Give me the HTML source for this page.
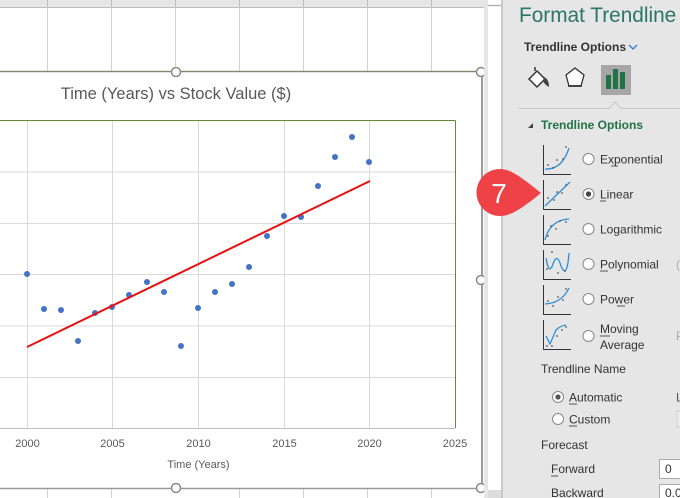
<!DOCTYPE html>
<html><head><meta charset="utf-8"><style>
html,body{margin:0;padding:0;width:680px;height:498px;overflow:hidden;background:#fff;font-family:"Liberation Sans",sans-serif}
svg text{font-family:"Liberation Sans",sans-serif}
</style></head><body>
<svg width="680" height="498" viewBox="0 0 680 498" xmlns="http://www.w3.org/2000/svg">
<rect x="0" y="0" width="484" height="498" fill="#fff"/>
<rect x="0" y="0" width="484" height="7" fill="#e6e6e6"/>
<line x1="0" y1="7.5" x2="484" y2="7.5" stroke="#bdbdbd"/>
<g stroke="#d4d4d4">
<line x1="47.5" y1="0" x2="47.5" y2="71"/><line x1="111.5" y1="0" x2="111.5" y2="71"/><line x1="175.5" y1="0" x2="175.5" y2="71"/><line x1="239.5" y1="0" x2="239.5" y2="71"/><line x1="303.5" y1="0" x2="303.5" y2="71"/><line x1="367.5" y1="0" x2="367.5" y2="71"/><line x1="431.5" y1="0" x2="431.5" y2="71"/>
<line x1="47.5" y1="489" x2="47.5" y2="498"/><line x1="111.5" y1="489" x2="111.5" y2="498"/><line x1="239.5" y1="489" x2="239.5" y2="498"/><line x1="303.5" y1="489" x2="303.5" y2="498"/><line x1="367.5" y1="489" x2="367.5" y2="498"/><line x1="431.5" y1="489" x2="431.5" y2="498"/>
</g>
<g stroke="#bbb" stroke-width="1">
<line x1="47.5" y1="0" x2="47.5" y2="7"/><line x1="111.5" y1="0" x2="111.5" y2="7"/><line x1="175.5" y1="0" x2="175.5" y2="7"/><line x1="239.5" y1="0" x2="239.5" y2="7"/><line x1="303.5" y1="0" x2="303.5" y2="7"/><line x1="367.5" y1="0" x2="367.5" y2="7"/><line x1="431.5" y1="0" x2="431.5" y2="7"/>
</g>
<line x1="0" y1="71.5" x2="481" y2="71.5" stroke="#8a8a8a" stroke-width="1.5"/>
<line x1="0" y1="71.5" x2="481" y2="71.5" stroke="#6d8f4a" stroke-width="0.8" opacity="0.6"/>
<line x1="0" y1="488.5" x2="481" y2="488.5" stroke="#9a9a9a" stroke-width="1.5"/>
<line x1="482" y1="71" x2="482" y2="489" stroke="#9a9a9a" stroke-width="2"/>
<circle cx="176" cy="72" r="4.5" fill="#fff" stroke="#8a8a8a" stroke-width="1.5"/>
<circle cx="481" cy="72" r="4.5" fill="#fff" stroke="#8a8a8a" stroke-width="1.5"/>
<circle cx="176" cy="488" r="4.5" fill="#fff" stroke="#8a8a8a" stroke-width="1.5"/>
<circle cx="481" cy="488" r="4.5" fill="#fff" stroke="#8a8a8a" stroke-width="1.5"/>
<circle cx="481" cy="280" r="4.5" fill="#fff" stroke="#8a8a8a" stroke-width="1.5"/>
<text x="176" y="99" font-size="16.5" fill="#595959" text-anchor="middle">Time (Years) vs Stock Value ($)</text>
<g stroke="#d9d9d9">
<line x1="0" y1="172" x2="455" y2="172"/><line x1="0" y1="223.5" x2="455" y2="223.5"/><line x1="0" y1="274.5" x2="455" y2="274.5"/><line x1="0" y1="326" x2="455" y2="326"/><line x1="0" y1="377.5" x2="455" y2="377.5"/>
<line x1="27.5" y1="121" x2="27.5" y2="428"/><line x1="112.5" y1="121" x2="112.5" y2="428"/><line x1="198.5" y1="121" x2="198.5" y2="428"/><line x1="284.5" y1="121" x2="284.5" y2="428"/><line x1="369.5" y1="121" x2="369.5" y2="428"/>
</g>
<line x1="0" y1="428.5" x2="455" y2="428.5" stroke="#bfbfbf"/>
<line x1="0" y1="120.5" x2="455.5" y2="120.5" stroke="#5e8a3a"/>
<line x1="455.5" y1="120.5" x2="455.5" y2="428" stroke="#5e8a3a"/>
<g font-size="11" fill="#595959" text-anchor="middle">
<text x="27.5" y="447">2000</text><text x="112.5" y="447">2005</text><text x="198.5" y="447">2010</text><text x="284.5" y="447">2015</text><text x="369.5" y="447">2020</text><text x="455" y="447">2025</text>
<text x="198.5" y="468">Time (Years)</text>
</g>
<g fill="#4472c4">
<circle cx="27" cy="274" r="3"/><circle cx="44" cy="309" r="3"/><circle cx="61" cy="310" r="3"/><circle cx="78" cy="341" r="3"/><circle cx="95" cy="313" r="3"/><circle cx="112" cy="307" r="3"/><circle cx="129" cy="295" r="3"/><circle cx="147" cy="282" r="3"/><circle cx="164" cy="292" r="3"/><circle cx="181" cy="346" r="3"/><circle cx="198" cy="308" r="3"/><circle cx="215" cy="292" r="3"/><circle cx="232" cy="284" r="3"/><circle cx="249" cy="267" r="3"/><circle cx="267" cy="236" r="3"/><circle cx="284" cy="216" r="3"/><circle cx="301" cy="217" r="3"/><circle cx="318" cy="186" r="3"/><circle cx="335" cy="157" r="3"/><circle cx="352" cy="137" r="3"/><circle cx="369" cy="162" r="3"/>
</g>
<line x1="27" y1="347" x2="370" y2="181" stroke="#e81010" stroke-width="2"/>
<rect x="484" y="0" width="4" height="498" fill="#e6e6e6"/>
<rect x="488" y="0" width="13" height="498" fill="#fff"/>
<line x1="488" y1="5.5" x2="501" y2="5.5" stroke="#b5b5b5" stroke-width="1.5"/>
<rect x="488" y="490" width="13" height="8" fill="#dcdcdc"/>
<rect x="501" y="0" width="2" height="498" fill="#c8c8c8"/>
<rect x="503" y="0" width="177" height="498" fill="#e6e6e6"/>
<text x="519" y="22" font-size="20.8" fill="#2a7863">Format Trendline</text>
<text x="524" y="51" font-size="12" font-weight="bold" fill="#333">Trendline Options</text>
<path d="M629 45l4 4 4-4" fill="none" stroke="#2b7cd3" stroke-width="1.3"/>
<g transform="translate(527,67)">
<path d="M2 12 L10 4 L18 12 L10 20 Z" fill="#fff" stroke="#333" stroke-width="1.5"/>
<path d="M8 4 L8 0" stroke="#333" stroke-width="1.5"/>
<path d="M17 10 Q22 12 22 20 Q18 18 16 14 Z" fill="#444"/>
</g>
<path d="M575 68 L584 75 L581 86 L569 86 L566 75 Z" fill="#fff" stroke="#333" stroke-width="1.3"/>
<line x1="568" y1="86" x2="582" y2="86" stroke="#444" stroke-width="2"/>
<rect x="601" y="65" width="30" height="30" fill="#a6a6a6"/>
<rect x="606" y="75" width="5" height="14" fill="#217346"/><rect x="613" y="69" width="5" height="20" fill="#217346"/><rect x="620" y="72" width="5" height="17" fill="#217346"/>
<path d="M519 108.5 H609 L615 102 L621 108.5 H680" fill="none" stroke="#c6c6c6"/>
<path d="M528 128 L533 123 L533 128 Z" fill="#444"/>
<text x="541" y="129" font-size="12" font-weight="bold" fill="#217346">Trendline Options</text>
<g fill="none" stroke="#333" stroke-width="1">
<path d="M543.5 145 V174.5 H571"/><path d="M543.5 180 V209.5 H571"/><path d="M543.5 215 V244.5 H571"/><path d="M543.5 250 V279.5 H571"/><path d="M543.5 285 V314.5 H571"/><path d="M543.5 320 V349.5 H571"/>
</g>
<g fill="none" stroke="#2f8fd8" stroke-width="1.3">
<path d="M545 169 Q562 170 569 148"/>
<path d="M545 206 L570 182"/>
<path d="M545 240 Q550 220 569 219"/>
<path d="M546 258 Q549 276 553 264 Q557 252 561 266 Q567 280 569 253"/>
<path d="M545 304 Q562 303 569 288"/>
<path d="M546 336 L550 344 L556 330 Q560 326 566 325"/>
</g>
<g fill="#555">
<circle cx="548" cy="165" r=".9"/><circle cx="553" cy="168" r=".9"/><circle cx="557" cy="160" r=".9"/><circle cx="563" cy="159" r=".9"/><circle cx="566" cy="147" r=".9"/>
<circle cx="548" cy="198" r=".9"/><circle cx="554" cy="200" r=".9"/><circle cx="557" cy="192" r=".9"/><circle cx="562" cy="193" r=".9"/><circle cx="566" cy="185" r=".9"/>
<circle cx="548" cy="236" r=".9"/><circle cx="551" cy="226" r=".9"/><circle cx="556" cy="229" r=".9"/><circle cx="560" cy="221" r=".9"/><circle cx="566" cy="222" r=".9"/>
<circle cx="547" cy="269" r=".9"/><circle cx="552" cy="252" r=".9"/><circle cx="558" cy="273" r=".9"/><circle cx="565" cy="271" r=".9"/>
<circle cx="548" cy="301" r=".9"/><circle cx="553" cy="306" r=".9"/><circle cx="558" cy="297" r=".9"/><circle cx="563" cy="300" r=".9"/><circle cx="566" cy="289" r=".9"/>
<circle cx="547" cy="346" r=".9"/><circle cx="552" cy="346" r=".9"/><circle cx="557" cy="336" r=".9"/><circle cx="562" cy="330" r=".9"/><circle cx="566" cy="327" r=".9"/>
</g>
<g fill="#fff" stroke="#888" stroke-width="1">
<circle cx="588.5" cy="159" r="5.5"/><circle cx="588.5" cy="194" r="5.5"/><circle cx="588.5" cy="229" r="5.5"/><circle cx="588.5" cy="264" r="5.5"/><circle cx="588.5" cy="299" r="5.5"/><circle cx="588.5" cy="336" r="5.5"/>
<circle cx="558" cy="397" r="5.5"/><circle cx="558" cy="419" r="5.5"/>
</g>
<circle cx="588.5" cy="194" r="2.6" fill="#444"/>
<circle cx="558" cy="397" r="2.6" fill="#555"/>
<g font-size="12" fill="#333">
<text x="600" y="163.5">Exponential</text>
<text x="600" y="198.5">Linear</text>
<text x="600" y="233.5">Logarithmic</text>
<text x="600" y="268.5">Polynomial</text>
<text x="600" y="303.5">Power</text>
<text x="600" y="333">Moving</text>
<text x="600" y="349">Average</text>
<text x="541" y="373">Trendline Name</text>
<text x="569" y="401.5">Automatic</text>
<text x="569" y="423.5">Custom</text>
<text x="541" y="449">Forecast</text>
<text x="551" y="473">Forward</text>
<text x="551" y="497">Backward</text>
<text x="676" y="401.5" fill="#555">L</text>
</g>
<g stroke="#333" stroke-width="0.8">
<line x1="611" y1="166" x2="618" y2="166"/><line x1="600" y1="201" x2="606" y2="201"/><line x1="600" y1="271" x2="608" y2="271"/><line x1="617" y1="306" x2="625" y2="306"/><line x1="600" y1="336" x2="610" y2="336"/><line x1="569" y1="404" x2="577" y2="404"/><line x1="569" y1="426" x2="577" y2="426"/><line x1="551" y1="476" x2="558" y2="476"/>
</g>
<text x="676" y="268.5" font-size="12" fill="#aaa">(</text>
<text x="676" y="340" font-size="12" fill="#aaa">P</text>
<rect x="677" y="411" width="5" height="16" fill="#ececec" stroke="#d0d0d0"/>
<rect x="659.5" y="459.5" width="25" height="19" fill="#fff" stroke="#aaa"/>
<text x="665" y="473" font-size="12" fill="#333">0</text>
<rect x="659.5" y="484.5" width="25" height="19" fill="#fff" stroke="#aaa"/>
<text x="665" y="497" font-size="12" fill="#333">0.0</text>
<path d="M500 169 C510 169 520 176 541 193 C520 210 510 216 500 216 A23.5 23.5 0 0 1 500 169 Z" fill="#ef4247"/>
<text x="499" y="203" font-size="28" fill="#fff" text-anchor="middle">7</text>
</svg>
</body></html>
